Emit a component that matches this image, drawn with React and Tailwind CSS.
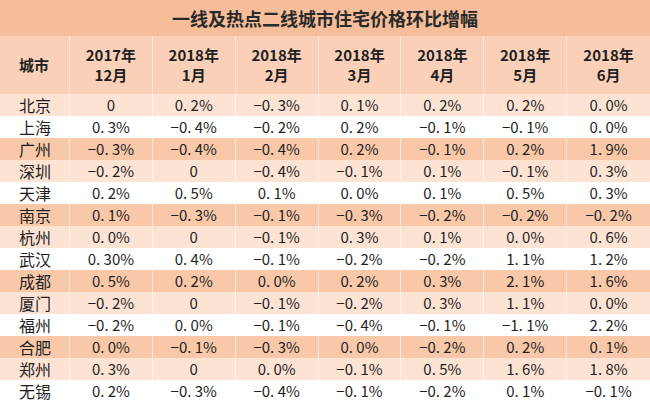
import React from 'react';

const months = [
  ['2017年', '12月'],
  ['2018年', '1月'],
  ['2018年', '2月'],
  ['2018年', '3月'],
  ['2018年', '4月'],
  ['2018年', '5月'],
  ['2018年', '6月'],
];

const rows = [
  ['北京', '0', '0. 2%', '−0. 3%', '0. 1%', '0. 2%', '0. 2%', '0. 0%'],
  ['上海', '0. 3%', '−0. 4%', '−0. 2%', '0. 2%', '−0. 1%', '−0. 1%', '0. 0%'],
  ['广州', '−0. 3%', '−0. 4%', '−0. 4%', '0. 2%', '−0. 1%', '0. 2%', '1. 9%'],
  ['深圳', '−0. 2%', '0', '−0. 4%', '−0. 1%', '0. 1%', '−0. 1%', '0. 3%'],
  ['天津', '0. 2%', '0. 5%', '0. 1%', '0. 0%', '0. 1%', '0. 5%', '0. 3%'],
  ['南京', '0. 1%', '−0. 3%', '−0. 1%', '−0. 3%', '−0. 2%', '−0. 2%', '−0. 2%'],
  ['杭州', '0. 0%', '0', '−0. 1%', '0. 3%', '0. 1%', '0. 0%', '0. 6%'],
  ['武汉', '0. 30%', '0. 4%', '−0. 1%', '−0. 2%', '−0. 2%', '1. 1%', '1. 2%'],
  ['成都', '0. 5%', '0. 2%', '0. 0%', '0. 2%', '0. 3%', '2. 1%', '1. 6%'],
  ['厦门', '−0. 2%', '0', '−0. 1%', '−0. 2%', '0. 3%', '1. 1%', '0. 0%'],
  ['福州', '−0. 2%', '0. 0%', '−0. 1%', '−0. 4%', '−0. 1%', '−1. 1%', '2. 2%'],
  ['合肥', '0. 0%', '−0. 1%', '−0. 3%', '0. 0%', '−0. 2%', '0. 2%', '0. 1%'],
  ['郑州', '0. 3%', '0', '0. 0%', '−0. 1%', '0. 5%', '1. 6%', '1. 8%'],
  ['无锡', '0. 2%', '−0. 3%', '−0. 4%', '−0. 1%', '−0. 2%', '0. 1%', '−0. 1%'],
];

// rows repeat in threes: dark, light, white (starting light for 北京)
const rowBg = ['bg-[#fce3d3]', 'bg-white', 'bg-[#f8c8a9]'];

export default function App() {
  return (
    <div
      className="w-[650px] h-[409px] bg-white text-[#1f1f1f] overflow-hidden"
      style={{ fontFamily: '"Noto Sans CJK SC", "Noto Sans", sans-serif' }}
    >
      {/* Title */}
      <div className="h-[36px] bg-[#f5bd99] flex items-center justify-center text-[18px] font-bold text-[#2a2a2a]">
        一线及热点二线城市住宅价格环比增幅
      </div>

      {/* Header */}
      <div className="h-[58px] bg-[#fad1b8] grid grid-cols-[70px_repeat(7,1fr)] text-[15px] font-bold leading-[20px]">
        <div className="flex items-center pl-[19px] border-r border-[#fde7da]">城市</div>
        {months.map(([y, m], i) => (
          <div
            key={i}
            className={`flex flex-col items-center justify-center ${i < 6 ? 'border-r border-[#fde7da]' : ''}`}
          >
            <span>{y}</span>
            <span>{m}</span>
          </div>
        ))}
      </div>

      {/* Body */}
      {rows.map((r, ri) => (
        <div
          key={r[0]}
          className={`h-[22px] grid grid-cols-[70px_repeat(7,1fr)] text-[15px] leading-[22px] ${rowBg[ri % 3]}`}
        >
          <div className="pl-[19px] text-[16px] border-r border-white/60">{r[0]}</div>
          {r.slice(1).map((v, ci) => (
            <div
              key={ci}
              className={`text-center ${ci < 6 ? 'border-r border-white/60' : ''}`}
            >
              {v}
            </div>
          ))}
        </div>
      ))}
    </div>
  );
}
